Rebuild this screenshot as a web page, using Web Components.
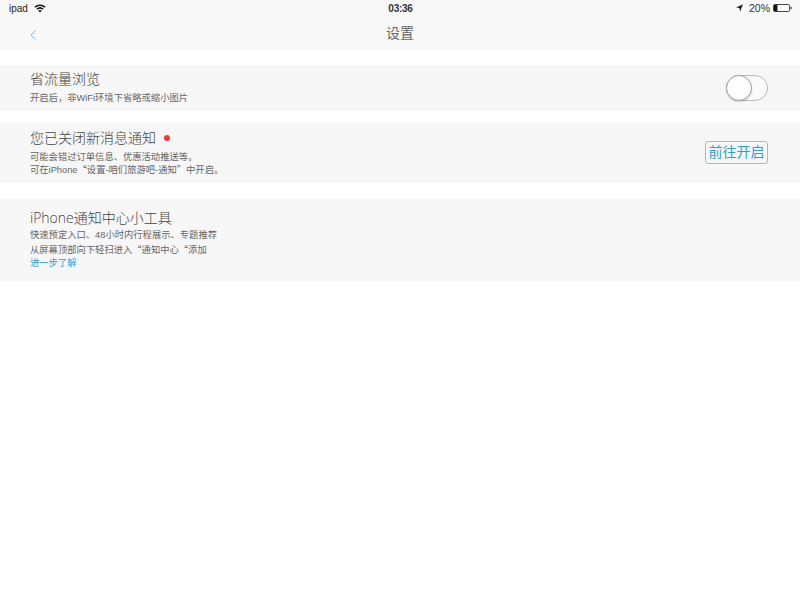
<!DOCTYPE html>
<html lang="zh">
<head>
<meta charset="utf-8">
<title>设置</title>
<style>
  html, body { margin: 0; padding: 0; background: #fff; }
  body { font-family: "Liberation Sans", "Noto Sans CJK SC", sans-serif; width: 800px; height: 600px; overflow: hidden; }
  .cjk { font-family: "Noto Sans CJK SC", sans-serif; }
  setting-row a { color: #1f9fe0; }
</style>
</head>
<body>
<app-header title-text="设置"></app-header>
<setting-row style="--row-height:46px;--row-top:15px;--title-top:4px;--desc-gap:3px" title-text="省流量浏览">
  <span slot="desc">开启后，非WiFi环境下省略或缩小图片</span>
  <toggle-switch slot="action"></toggle-switch>
</setting-row>
<setting-row style="--row-height:60px;--row-top:12px;--title-top:5px;--desc-gap:3px;--desc-line:12px" title-text="您已关闭新消息通知" dot>
  <span slot="desc">可能会错过订单信息、优惠活动推送等。<br>可在iPhone<span class="cjk">“</span>设置-咱们旅游吧-通知<span class="cjk">”</span>中开启。</span>
  <open-button slot="action">前往开启</open-button>
</setting-row>
<setting-row style="--row-height:82px;--row-top:16px;--title-top:9px;--desc-gap:1px;--desc-line:13.5px" title-text="iPhone通知中心小工具">
  <span slot="desc">快速预定入口、48小时内行程展示、专题推荐<br>从屏幕顶部向下轻扫进入<span class="cjk">“</span>通知中心<span class="cjk">“</span>添加<br><a>进一步了解</a></span>
</setting-row>
<script>
customElements.define('status-bar', class extends HTMLElement {
  constructor() {
    super();
    this.attachShadow({ mode: 'open' }).innerHTML = `
    <style>
      :host { display: grid; grid-template-columns: 1fr auto 1fr; align-items: center; height: 16px; padding: 0 8px 0 9px; font-size: 10px; color: #222; }
      .left { display: flex; align-items: center; gap: 6px; }
      .right { display: flex; align-items: center; justify-content: flex-end; gap: 3px; }
      .time { font-size: 10px; font-weight: bold; letter-spacing: -.25px; color: #333; }
      svg { display: block; }
    </style>
    <div class="left">
      <span>ipad</span>
      <svg width="12" height="9" viewBox="0 0 12 9"><path d="M6 8.6 4.3 6.7a2.5 2.5 0 0 1 3.4 0zM3.4 5.8 2.4 4.7a5.4 5.4 0 0 1 7.2 0L8.6 5.8a4 4 0 0 0-5.2 0zM1.5 3.8.4 2.7a8.3 8.3 0 0 1 11.2 0l-1.1 1.1a6.8 6.8 0 0 0-9 0z" fill="#111"/></svg>
    </div>
    <div class="time">03:36</div>
    <div class="right">
      <svg width="7" height="8" viewBox="0 0 7 8" style="margin-right:3px"><path d="M7 .3 0 3.6l3.4.4.6 3.7z" fill="#222"/></svg>
      <span style="font-size:10.5px;color:#333">20%</span>
      <svg width="19" height="8" viewBox="0 0 19 8"><rect x=".5" y=".5" width="16" height="7" rx="1.2" fill="none" stroke="#444"/><rect x="1" y="1" width="3.4" height="6" fill="#111"/><path d="M17.6 2.6c.8 0 1.2.6 1.2 1.4s-.4 1.4-1.2 1.4z" fill="#333"/></svg>
    </div>`;
  }
});

customElements.define('app-header', class extends HTMLElement {
  constructor() {
    super();
    this.attachShadow({ mode: 'open' }).innerHTML = `
    <style>
      :host { display: block; height: 50px; background: #f8f8f8; }
      .nav { display: grid; grid-template-columns: 1fr auto 1fr; align-items: center; height: 32px; padding: 0 30px; font-size: 14px; color: #666; }
      svg { display: block; margin-top: 5px; }
      span { margin-top: -1px; }
    </style>
    <status-bar></status-bar>
    <div class="nav">
      <svg width="6" height="10" viewBox="0 0 6 10"><path d="M5.2.6.9 5l4.3 4.4" fill="none" stroke="#63b8e6" stroke-width=".9"/></svg>
      <span>${this.getAttribute('title-text')}</span>
      <span></span>
    </div>`;
  }
});

customElements.define('setting-row', class extends HTMLElement {
  constructor() {
    super();
    let title = this.getAttribute('title-text');
    let dot = this.hasAttribute('dot') ? '<i></i>' : '';
    this.attachShadow({ mode: 'open' }).innerHTML = `
    <style>
      :host { display: flex; justify-content: space-between; align-items: flex-start; box-sizing: border-box; height: var(--row-height); margin-top: var(--row-top); padding: var(--title-top) 32px 0 30px; background: #f7f7f7; }
      .title { display: flex; align-items: center; font-family: "Open Sans", "Noto Sans CJK SC", sans-serif; font-weight: 300; font-size: 14px; line-height: 20px; color: #444; }
      i { width: 6px; height: 6px; margin-left: 8px; border-radius: 50%; background: #f9363a; }
      .desc { margin-top: var(--desc-gap, 2px); font-size: 9.3px; line-height: var(--desc-line, 13px); color: #666; }
      .action { align-self: center; margin-top: calc(-1px - var(--title-top)); }
    </style>
    <div>
      <div class="title">${title}${dot}</div>
      <div class="desc"><slot name="desc"></slot></div>
    </div>
    <div class="action"><slot name="action"></slot></div>`;
  }
});

customElements.define('toggle-switch', class extends HTMLElement {
  constructor() {
    super();
    this.attachShadow({ mode: 'open' }).innerHTML = `
    <style>
      :host { display: block; position: relative; box-sizing: border-box; width: 42px; height: 26px; margin-top: 1px; border: 1px solid #b9b9b9; border-radius: 13px; background: #fafafa; }
      .knob { position: absolute; left: -1px; top: -1px; box-sizing: border-box; width: 26px; height: 26px; border: 1px solid #a0a0a0; border-radius: 50%; background: #fdfdfd; box-shadow: 0 1px 2px rgba(0,0,0,.15); }
    </style>
    <div class="knob"></div>`;
  }
});

customElements.define('open-button', class extends HTMLElement {
  constructor() {
    super();
    this.attachShadow({ mode: 'open' }).innerHTML = `
    <style>
      :host { display: block; box-sizing: border-box; width: 63px; height: 23px; border: 1px solid #b5b5b5; border-radius: 3px; font-size: 14px; line-height: 21px; text-align: center; color: #2a9fdc; }
    </style>
    <slot></slot>`;
  }
});
</script>
</body>
</html>
